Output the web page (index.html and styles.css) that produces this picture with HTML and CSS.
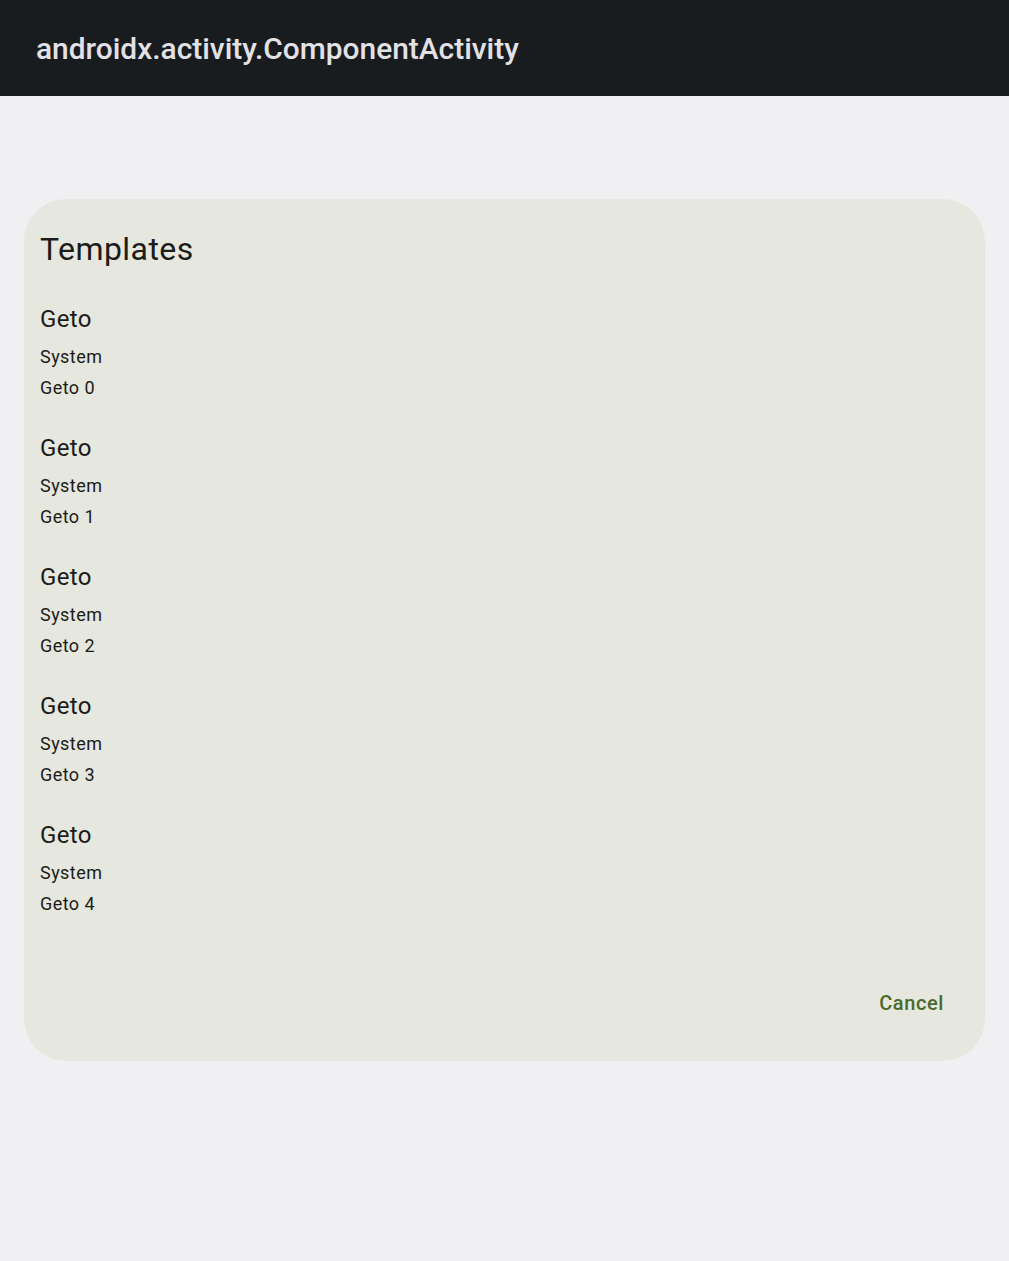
FILE: index.html
```html
<!DOCTYPE html>
<html>
<head>
<meta charset="utf-8">
<link rel="stylesheet" href="styles.css">
</head>
<body>
<header class="appbar"><span class="appbar-title">androidx.activity.ComponentActivity</span></header>
<main class="content">
  <section class="dialog">
    <h1 class="dialog-title">Templates</h1>
    <ul class="list">
      <li class="item"><div class="item-title">Geto</div><div class="item-line first">System</div><div class="item-line">Geto 0</div></li>
      <li class="item"><div class="item-title">Geto</div><div class="item-line first">System</div><div class="item-line">Geto 1</div></li>
      <li class="item"><div class="item-title">Geto</div><div class="item-line first">System</div><div class="item-line">Geto 2</div></li>
      <li class="item"><div class="item-title">Geto</div><div class="item-line first">System</div><div class="item-line">Geto 3</div></li>
      <li class="item"><div class="item-title">Geto</div><div class="item-line first">System</div><div class="item-line">Geto 4</div></li>
    </ul>
    <div class="actions"><button class="text-btn">Cancel</button></div>
  </section>
</main>
</body>
</html>
```
FILE: styles.css
```css
* { box-sizing: border-box; }
html, body { margin: 0; padding: 0; }
body {
  width: 1009px;
  height: 1261px;
  background: #f0f0f3;
  font-family: Roboto, "Noto Sans", sans-serif;
  color: #1b1c18;
  overflow: hidden;
}
.appbar {
  height: 96px;
  background: #191c1f;
  display: flex;
  align-items: center;
  padding: 2px 0 0 36px;
}
.appbar-title {
  color: #e2e2e6;
  font-size: 29.9px;
  font-weight: 500;
  line-height: 36px;
}
.content {
  padding: 103px 24px 0 24px;
}
.dialog {
  background: #e6e7df;
  border-radius: 42px;
  padding: 30px 25px 34px 16px;
  height: 862px;
  display: flex;
  flex-direction: column;
}
.dialog-title {
  margin: 0;
  font-size: 32px;
  font-weight: 400;
  line-height: 40px;
  letter-spacing: 0.45px;
}
.list {
  list-style: none;
  margin: 32px 0 0 0;
  padding: 0;
  display: flex;
  flex-direction: column;
  gap: 27px;
}
.item-title {
  font-size: 24px;
  line-height: 36px;
  letter-spacing: 0.35px;
}
.item-line {
  font-size: 18px;
  line-height: 30px;
  letter-spacing: 0.45px;
}
.item-line.first {
  margin-top: 4px;
  line-height: 32px;
}
.actions {
  margin-top: auto;
  display: flex;
  justify-content: flex-end;
}
.text-btn {
  font-family: Roboto, "Noto Sans", sans-serif;
  background: none;
  border: none;
  height: 48px;
  padding: 0 16px;
  font-size: 20px;
  font-weight: 500;
  letter-spacing: 0.6px;
  color: #4a6a2a;
  cursor: pointer;
}
```
